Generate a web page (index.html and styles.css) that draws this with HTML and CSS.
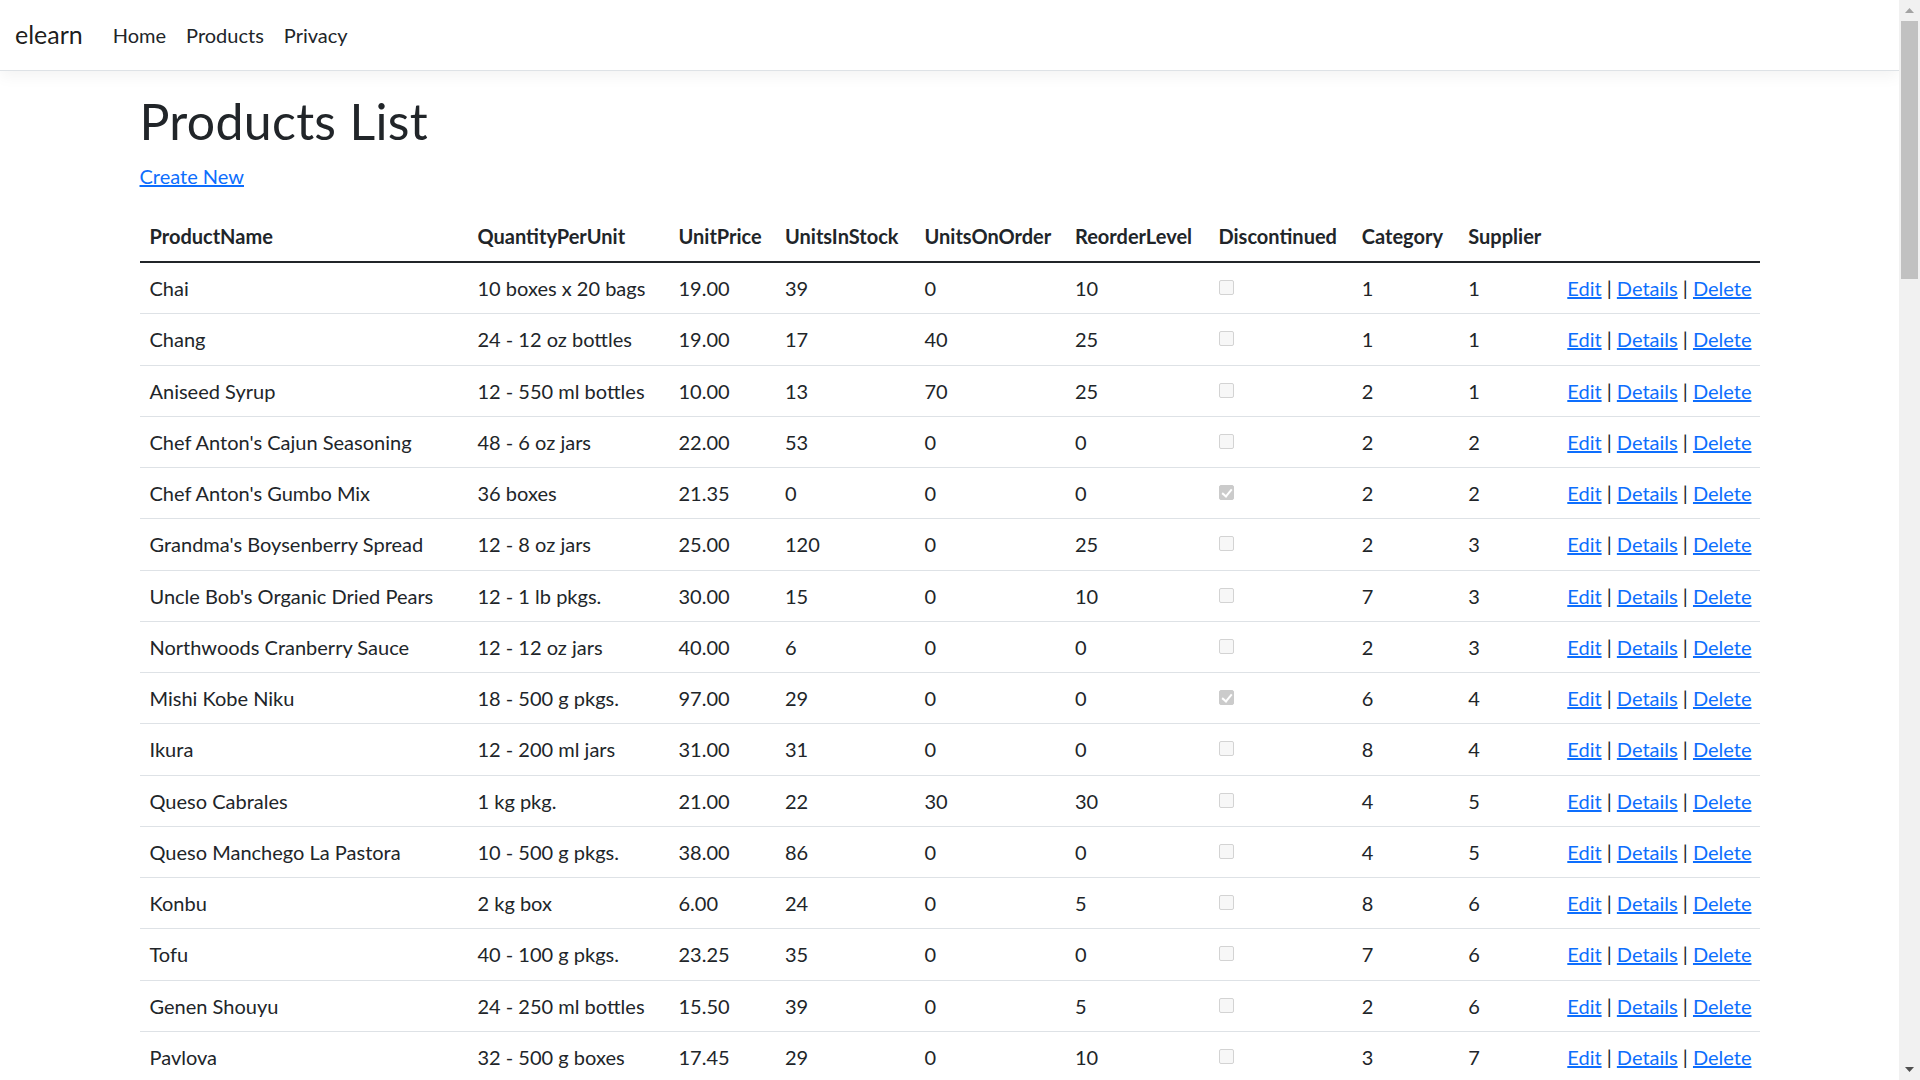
FILE: index.html
```html
<!DOCTYPE html>
<html lang="en">
<head>
<meta charset="utf-8">
<title>Products List - elearn</title>
<link rel="stylesheet" href="styles.css">
</head>
<body>
<div class="window">
  <div class="viewport">
    <header>
      <nav class="navbar">
        <a class="brand" href="#">elearn</a>
        <ul class="nav">
          <li><a class="nav-link" href="#">Home</a></li>
          <li><a class="nav-link" href="#">Products</a></li>
          <li><a class="nav-link" href="#">Privacy</a></li>
        </ul>
      </nav>
    </header>
    <div class="container">
      <main>
        <h1 class="title">Products List</h1>
        <p class="create"><a href="#">Create New</a></p>
        <table class="table">
          <colgroup>
            <col class="c-name"><col class="c-qty"><col class="c-price"><col class="c-stock"><col class="c-order"><col class="c-reorder"><col class="c-disc"><col class="c-cat"><col class="c-sup"><col class="c-act">
          </colgroup>
          <thead>
            <tr>
              <th>ProductName</th><th>QuantityPerUnit</th><th>UnitPrice</th><th>UnitsInStock</th><th>UnitsOnOrder</th><th>ReorderLevel</th><th>Discontinued</th><th>Category</th><th>Supplier</th><th></th>
            </tr>
          </thead>
          <tbody>
            <tr><td>Chai</td><td>10 boxes x 20 bags</td><td>19.00</td><td>39</td><td>0</td><td>10</td><td><input class="chk" type="checkbox" disabled></td><td>1</td><td>1</td><td><a href="#">Edit</a> | <a href="#">Details</a> | <a href="#">Delete</a></td></tr>
            <tr><td>Chang</td><td>24 - 12 oz bottles</td><td>19.00</td><td>17</td><td>40</td><td>25</td><td><input class="chk" type="checkbox" disabled></td><td>1</td><td>1</td><td><a href="#">Edit</a> | <a href="#">Details</a> | <a href="#">Delete</a></td></tr>
            <tr><td>Aniseed Syrup</td><td>12 - 550 ml bottles</td><td>10.00</td><td>13</td><td>70</td><td>25</td><td><input class="chk" type="checkbox" disabled></td><td>2</td><td>1</td><td><a href="#">Edit</a> | <a href="#">Details</a> | <a href="#">Delete</a></td></tr>
            <tr><td>Chef Anton's Cajun Seasoning</td><td>48 - 6 oz jars</td><td>22.00</td><td>53</td><td>0</td><td>0</td><td><input class="chk" type="checkbox" disabled></td><td>2</td><td>2</td><td><a href="#">Edit</a> | <a href="#">Details</a> | <a href="#">Delete</a></td></tr>
            <tr><td>Chef Anton's Gumbo Mix</td><td>36 boxes</td><td>21.35</td><td>0</td><td>0</td><td>0</td><td><input class="chk" type="checkbox" disabled checked></td><td>2</td><td>2</td><td><a href="#">Edit</a> | <a href="#">Details</a> | <a href="#">Delete</a></td></tr>
            <tr><td>Grandma's Boysenberry Spread</td><td>12 - 8 oz jars</td><td>25.00</td><td>120</td><td>0</td><td>25</td><td><input class="chk" type="checkbox" disabled></td><td>2</td><td>3</td><td><a href="#">Edit</a> | <a href="#">Details</a> | <a href="#">Delete</a></td></tr>
            <tr><td>Uncle Bob's Organic Dried Pears</td><td>12 - 1 lb pkgs.</td><td>30.00</td><td>15</td><td>0</td><td>10</td><td><input class="chk" type="checkbox" disabled></td><td>7</td><td>3</td><td><a href="#">Edit</a> | <a href="#">Details</a> | <a href="#">Delete</a></td></tr>
            <tr><td>Northwoods Cranberry Sauce</td><td>12 - 12 oz jars</td><td>40.00</td><td>6</td><td>0</td><td>0</td><td><input class="chk" type="checkbox" disabled></td><td>2</td><td>3</td><td><a href="#">Edit</a> | <a href="#">Details</a> | <a href="#">Delete</a></td></tr>
            <tr><td>Mishi Kobe Niku</td><td>18 - 500 g pkgs.</td><td>97.00</td><td>29</td><td>0</td><td>0</td><td><input class="chk" type="checkbox" disabled checked></td><td>6</td><td>4</td><td><a href="#">Edit</a> | <a href="#">Details</a> | <a href="#">Delete</a></td></tr>
            <tr><td>Ikura</td><td>12 - 200 ml jars</td><td>31.00</td><td>31</td><td>0</td><td>0</td><td><input class="chk" type="checkbox" disabled></td><td>8</td><td>4</td><td><a href="#">Edit</a> | <a href="#">Details</a> | <a href="#">Delete</a></td></tr>
            <tr><td>Queso Cabrales</td><td>1 kg pkg.</td><td>21.00</td><td>22</td><td>30</td><td>30</td><td><input class="chk" type="checkbox" disabled></td><td>4</td><td>5</td><td><a href="#">Edit</a> | <a href="#">Details</a> | <a href="#">Delete</a></td></tr>
            <tr><td>Queso Manchego La Pastora</td><td>10 - 500 g pkgs.</td><td>38.00</td><td>86</td><td>0</td><td>0</td><td><input class="chk" type="checkbox" disabled></td><td>4</td><td>5</td><td><a href="#">Edit</a> | <a href="#">Details</a> | <a href="#">Delete</a></td></tr>
            <tr><td>Konbu</td><td>2 kg box</td><td>6.00</td><td>24</td><td>0</td><td>5</td><td><input class="chk" type="checkbox" disabled></td><td>8</td><td>6</td><td><a href="#">Edit</a> | <a href="#">Details</a> | <a href="#">Delete</a></td></tr>
            <tr><td>Tofu</td><td>40 - 100 g pkgs.</td><td>23.25</td><td>35</td><td>0</td><td>0</td><td><input class="chk" type="checkbox" disabled></td><td>7</td><td>6</td><td><a href="#">Edit</a> | <a href="#">Details</a> | <a href="#">Delete</a></td></tr>
            <tr><td>Genen Shouyu</td><td>24 - 250 ml bottles</td><td>15.50</td><td>39</td><td>0</td><td>5</td><td><input class="chk" type="checkbox" disabled></td><td>2</td><td>6</td><td><a href="#">Edit</a> | <a href="#">Details</a> | <a href="#">Delete</a></td></tr>
            <tr><td>Pavlova</td><td>32 - 500 g boxes</td><td>17.45</td><td>29</td><td>0</td><td>10</td><td><input class="chk" type="checkbox" disabled></td><td>3</td><td>7</td><td><a href="#">Edit</a> | <a href="#">Details</a> | <a href="#">Delete</a></td></tr>
          </tbody>
        </table>
      </main>
    </div>
  </div>
  <div class="scrollbar">
    <div class="sb-btn">
      <svg width="9" height="5" viewBox="0 0 9 5"><polygon points="0,5 9,5 4.5,0" fill="#a3a3a3"/></svg>
    </div>
    <div class="sb-track"><div class="sb-thumb"></div></div>
    <div class="sb-btn">
      <svg width="9" height="5" viewBox="0 0 9 5"><polygon points="0,0 9,0 4.5,5" fill="#505050"/></svg>
    </div>
  </div>
</div>
</body>
</html>
```

FILE: styles.css
```css
html, body {
  margin: 0;
  height: 100%;
  overflow: hidden;
}

body {
  font-family: Lato, "Liberation Sans", sans-serif;
  font-size: 20px;
  line-height: 30px;
  color: #212529;
  background: #fff;
}

a {
  color: #0d6efd;
  text-decoration: underline;
}

.window {
  display: flex;
  height: 100vh;
}

.viewport {
  flex: 1;
  min-width: 0;
  overflow: hidden;
}

/* navbar */
.navbar {
  display: flex;
  align-items: center;
  padding: 10px 15px;
  background: #fff;
  border-bottom: 1px solid #dee2e6;
  box-shadow: 0 5px 15px rgba(0, 0, 0, 0.05);
  margin-bottom: 20px;
}

.brand {
  font-size: 25px;
  line-height: 37.5px;
  padding: 6.25px 0;
  margin-right: 20px;
  color: rgba(0, 0, 0, 0.9);
  text-decoration: none;
}

.nav {
  display: flex;
  list-style: none;
  margin: 0;
  padding: 0;
}

.nav-link {
  display: block;
  padding: 10px;
  color: #212529;
  text-decoration: none;
}

/* content */
.container {
  max-width: 1650px;
  margin: 0 auto;
  padding: 0 15px;
  box-sizing: border-box;
}

.title {
  font-size: 50px;
  line-height: 60px;
  font-weight: 400;
  letter-spacing: 0.3px;
  margin: 0 0 10px;
}

.create {
  margin: 0 0 20px;
}

.table {
  width: 100%;
  table-layout: fixed;
  border-collapse: separate;
  border-spacing: 0;
  margin-bottom: 20px;
}

.c-name { width: 328px; }
.c-qty { width: 201px; }
.c-price { width: 106.5px; }
.c-stock { width: 139.5px; }
.c-order { width: 150.5px; }
.c-reorder { width: 143.5px; }
.c-disc { width: 143.3px; }
.c-cat { width: 106.5px; }
.c-sup { width: 99px; }
.c-act { width: auto; }

.table th,
.table td {
  text-align: left;
  padding: 10px;
  white-space: nowrap;
}

.table th {
  font-weight: 700;
  vertical-align: bottom;
  border-bottom: 2px solid #212529;
}

.table td {
  padding-top: 10.125px;
  padding-bottom: 10.125px;
  vertical-align: top;
  border-bottom: 1px solid #dee2e6;
}

.chk {
  -webkit-appearance: none;
  appearance: none;
  display: inline-block;
  vertical-align: top;
  width: 15px;
  height: 15px;
  margin: 7px 0 0;
  box-sizing: border-box;
  border: 1px solid #d3d3d3;
  border-radius: 2px;
  background: #f7f7f7;
}

.chk:checked {
  border-color: #cbcbcb;
  background-color: #cbcbcb;
  position: relative;
}

.chk:checked::after {
  content: "";
  position: absolute;
  left: 4px;
  top: 1px;
  width: 4px;
  height: 8px;
  border: solid #fff;
  border-width: 0 2px 2px 0;
  transform: rotate(40deg);
}

/* scrollbar */
.scrollbar {
  width: 21px;
  flex: none;
  display: flex;
  flex-direction: column;
  background: #f1f1f1;
}

.sb-btn {
  height: 21px;
  flex: none;
  display: flex;
  align-items: center;
  justify-content: center;
}

.sb-track {
  flex: 1;
  padding: 0 2px;
}

.sb-thumb {
  height: 258px;
  background: #c1c1c1;
}
```
